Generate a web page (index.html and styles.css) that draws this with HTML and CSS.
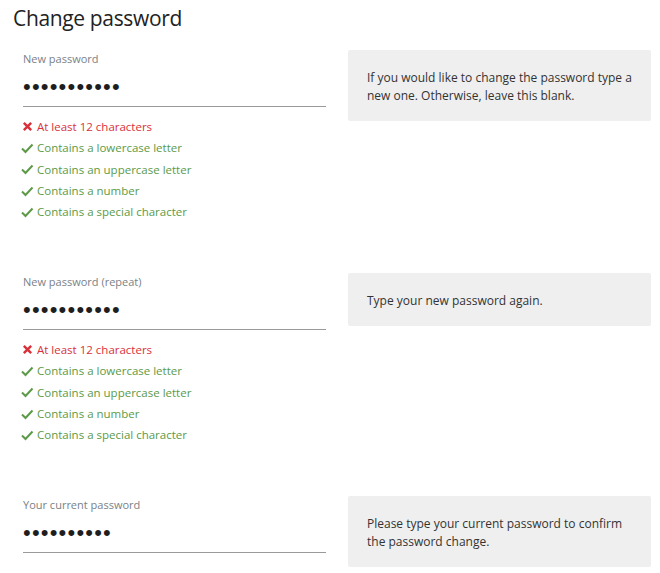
FILE: index.html
```html
<!DOCTYPE html>
<html lang="en">
<head>
<meta charset="utf-8">
<title>Change password</title>
<link rel="stylesheet" href="styles.css">
</head>
<body>
<main class="page">
  <h1 class="title">Change password</h1>

  <section class="row">
    <div class="field">
      <div class="label">New password</div>
      <div class="input"><span class="dots">•••••••••••</span></div>
      <ul class="reqs">
        <li class="req bad"><svg class="ico" viewBox="0 0 12 12"><path d="M2 2L10 10M10 2L2 10"/></svg>At least 12 characters</li>
        <li class="req ok"><svg class="ico" viewBox="0 0 12 12"><path d="M1 6.5L4.5 10L11.5 2.5"/></svg>Contains a lowercase letter</li>
        <li class="req ok"><svg class="ico" viewBox="0 0 12 12"><path d="M1 6.5L4.5 10L11.5 2.5"/></svg>Contains an uppercase letter</li>
        <li class="req ok"><svg class="ico" viewBox="0 0 12 12"><path d="M1 6.5L4.5 10L11.5 2.5"/></svg>Contains a number</li>
        <li class="req ok"><svg class="ico" viewBox="0 0 12 12"><path d="M1 6.5L4.5 10L11.5 2.5"/></svg>Contains a special character</li>
      </ul>
    </div>
    <div class="help">If you would like to change the password type a new one. Otherwise, leave this blank.</div>
  </section>

  <section class="row">
    <div class="field">
      <div class="label">New password (repeat)</div>
      <div class="input"><span class="dots">•••••••••••</span></div>
      <ul class="reqs">
        <li class="req bad"><svg class="ico" viewBox="0 0 12 12"><path d="M2 2L10 10M10 2L2 10"/></svg>At least 12 characters</li>
        <li class="req ok"><svg class="ico" viewBox="0 0 12 12"><path d="M1 6.5L4.5 10L11.5 2.5"/></svg>Contains a lowercase letter</li>
        <li class="req ok"><svg class="ico" viewBox="0 0 12 12"><path d="M1 6.5L4.5 10L11.5 2.5"/></svg>Contains an uppercase letter</li>
        <li class="req ok"><svg class="ico" viewBox="0 0 12 12"><path d="M1 6.5L4.5 10L11.5 2.5"/></svg>Contains a number</li>
        <li class="req ok"><svg class="ico" viewBox="0 0 12 12"><path d="M1 6.5L4.5 10L11.5 2.5"/></svg>Contains a special character</li>
      </ul>
    </div>
    <div class="help">Type your new password again.</div>
  </section>

  <section class="row">
    <div class="field field-last">
      <div class="label">Your current password</div>
      <div class="input"><span class="dots">••••••••••</span></div>
    </div>
    <div class="help">Please type your current password to confirm the password change.</div>
  </section>
</main>
</body>
</html>
```

FILE: styles.css
```css
html, body {
  margin: 0;
  padding: 0;
  background: #ffffff;
}

body {
  font-family: "Open Sans", "Noto Sans", "Liberation Sans", sans-serif;
  color: #333333;
}

.page {
  padding: 4px 9px 0 13px;
}

.title {
  margin: 0;
  font-size: 21px;
  font-weight: 400;
  line-height: 28px;
  letter-spacing: -0.35px;
  color: #222222;
}

.row {
  display: grid;
  grid-template-columns: 303px 303px;
  column-gap: 22px;
  align-items: start;
  padding-left: 10px;
  margin-top: 18px;
}

.row + .row {
  margin-top: 0;
}

.field {
  height: 223px;
}

.field-last {
  height: auto;
}

.label {
  margin-top: 1px;
  font-size: 11px;
  line-height: 16px;
  color: #7a7f87;
}

.input {
  height: 39px;
  border-bottom: 1px solid #9a9a9a;
  display: flex;
  align-items: center;
}

.dots {
  font-family: "Liberation Sans", sans-serif;
  font-size: 22px;
  line-height: 20px;
  letter-spacing: 1.2px;
  color: #1e1e1e;
}

.reqs {
  list-style: none;
  margin: 9px 0 0;
  padding: 0;
}

.req {
  display: flex;
  align-items: center;
  font-size: 11.5px;
  line-height: 21.3px;
  margin-left: -2px;
}

.ico {
  width: 12px;
  height: 12px;
  margin-right: 4px;
  fill: none;
  stroke-width: 2;
}

.bad {
  color: #d9303a;
}

.bad .ico {
  stroke: #d9303a;
  stroke-width: 2.6;
  width: 11px;
  height: 11px;
  margin: 0 4px 0 1px;
}

.ok {
  color: #5c9a48;
}

.ok .ico {
  stroke: #5c9a48;
}

.help {
  background: #efefef;
  border-radius: 2px;
  padding: 19px 16px 16px 19px;
  font-size: 12px;
  line-height: 18px;
  color: #333333;
}
```
